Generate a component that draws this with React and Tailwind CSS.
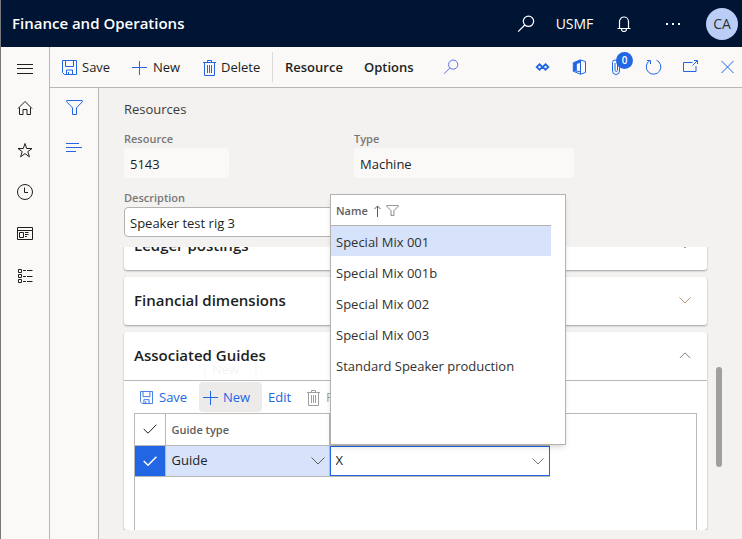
import React from "react";

const Svg = ({ size = 16, w, h, className = "", children, sw = 1 }) => (
  <svg
    width={w || size}
    height={h || size}
    viewBox={`0 0 ${w || size} ${h || size}`}
    fill="none"
    stroke="currentColor"
    strokeWidth={sw}
    className={`shrink-0 ${className}`}
    aria-hidden="true"
  >
    {children}
  </svg>
);

const SearchIcon = ({ size = 16, sw = 1 }) => (
  <svg width={size} height={size} viewBox="0 0 16 16" fill="none" stroke="currentColor" strokeWidth={sw} className="shrink-0" aria-hidden="true">
    <circle cx="10.2" cy="5.6" r="4.6" />
    <path d="M6.900 8.900 1 14.800" />
  </svg>
);

const SaveIcon = ({ size = 15 }) => (
  <svg width={size} height={size} viewBox="0 0 15 15" fill="none" stroke="currentColor" className="shrink-0" aria-hidden="true">
    <path d="M.5.5h14v14H2.500l-2-2zM3.500.5v6h8v-6M4.500 14.500v-4.500h6v4.500M6.500 12v2.500" />
  </svg>
);

const PlusIcon = () => (
  <Svg size={16}>
    <path d="M7.500 1v14M0 7.500h15" />
  </Svg>
);

const TrashIcon = () => (
  <Svg w={13} h={16}>
    <path d="M0 2.500h13M4.500 2.500v-2h4v2M1.500 2.500v13h10v-13M4.500 5v8M6.500 5v8M8.500 5v8" />
  </Svg>
);

const FunnelIcon = ({ w = 17, h = 15 }) => (
  <svg width={w} height={h} viewBox="0 0 17 15" fill="none" stroke="currentColor" className="shrink-0" aria-hidden="true">
    <path d="M.7.5h15.600v1.300L10.500 7.800v6.700h-4V7.800L.7 1.800z" />
  </svg>
);

const Chevron = ({ up, size = "w-3" }) => (
  <svg viewBox="0 0 14 8" fill="none" stroke="currentColor" className={`shrink-0 ${size}`} aria-hidden="true">
    <path d={up ? "M.5 7.500 7 1l6.500 6.500" : "M.5.5 7 7 13.500.5"} />
  </svg>
);

const Check = ({ sw = 1 }) => (
  <Svg w={14} h={10} sw={sw}>
    <path d="M.7 5 5 9.200 13.400.7" />
  </Svg>
);

const navItems = [
  ["Home", <path d="M1 8.500 8 1.500l7 7M2.500 7.500v7h3.500v-5h4v5h3.500v-7" />],
  ["Favorites", <path d="M8 1.500 9.700 6.500H15L10.800 9.600l1.600 5.200L8 11.600l-4.400 3.200 1.600-5.200L1 6.500h5.300z" />],
  ["Recent", <><circle cx="8" cy="8" r="7.500" /><path d="M7.500 3.500v5H11" /></>],
  ["Workspaces", <path d="M.5 1.500h15v12H.5zM.5 4.500h15M2.500 6.500h4v5h-4zM8 6.500h3.500M8 8.500h3.500M8 10.500h2" />],
  ["Modules", <path d="M1.500 1.500h3v3h-3zM1.500 6.500h3v3h-3zM1.500 11.500h3v3h-3zM6 2.500h3M10 2.500h5.500M6 8.500h3M10 8.500h5.500M6 13.500h3M10 13.500h5.500" />],
];

const guides = [
  "Special Mix 001",
  "Special Mix 001b",
  "Special Mix 002",
  "Special Mix 003",
  "Standard Speaker production",
];

function TopBar() {
  return (
    <header className="flex h-[47px] shrink-0 items-center bg-[#001433] pr-1 pl-[11px] text-white">
      <h1 className="flex-1 text-[15px] font-semibold whitespace-nowrap">Finance and Operations</h1>
      <button aria-label="Search" className="flex w-[49px] justify-center"><SearchIcon size={18} sw={1.1} /></button>
      <button className="w-[49px] text-center text-sm">USMF</button>
      <button aria-label="Notifications" className="flex w-[49px] justify-center">
        <Svg w={14} h={16} sw={1.2}>
          <path d="M.5 12.500h13M2.500 12.500V5.500a4.500 4.500 0 0 1 9 0v7M4.500 13a2.500 2.500 0 0 0 5 0" />
        </Svg>
      </button>
      <button aria-label="More" className="flex w-[49px] justify-center">
        <svg width="16" height="4" viewBox="0 0 16 4" fill="currentColor" aria-hidden="true">
          <rect x="1" y="1" width="2" height="2" /><rect x="7" y="1" width="2" height="2" /><rect x="13" y="1" width="2" height="2" />
        </svg>
      </button>
      <button className="ml-[9px] size-8 rounded-full bg-[#b9cdf6] text-sm text-[#323130]">CA</button>
    </header>
  );
}

function ActionBar() {
  return (
    <div className="flex h-[41px] shrink-0 items-center border-b border-[#b9b8b6] bg-[#faf9f8] pr-[6px] pl-3 text-[13px] text-[#201f1e]">
      <button className="flex w-[70px] items-center gap-[5px] pt-px"><span className="text-[#2266e3]"><SaveIcon /></span>Save</button>
      <button className="flex w-[71px] items-center gap-[5px] pt-px"><span className="text-[#2266e3]"><PlusIcon /></span>New</button>
      <button className="flex w-[69px] items-center gap-[5px] pt-px"><span className="text-[#2266e3]"><TrashIcon /></span>Delete</button>
      <span className="h-[30px] w-px bg-[#dddbd9]" />
      <button className="w-[79px] pt-px pl-3 text-left font-semibold">Resource</button>
      <button className="w-[79px] pt-px pl-3 text-left font-semibold">Options</button>
      <button aria-label="Find an action" className="pl-3 text-[#5b6fe6]"><SearchIcon /></button>
      <div className="ml-auto flex items-center gap-5 text-[#2266e3]">
        <button aria-label="Apps">
          <Svg w={17} h={16} sw={1.8}>
            <path d="M5.500 5.200 8.300 8 5.500 10.800 2.700 8zM11.500 5.200 14.300 8l-2.800 2.800L8.700 8z" />
          </Svg>
        </button>
        <button aria-label="Open in Office">
          <Svg w={17} h={16}>
            <path d="M2.300 3.800 9.500.8V3.300L5.300 4.600v7L2.300 12.300z" fill="currentColor" />
            <path d="M2.500 12.300 9.500 15.200V1l5 1.500v11l-5 1.700M5 12l4.500.8" />
          </Svg>
        </button>
        <button aria-label="Attachments" className="relative">
          <Svg w={17} h={16}>
            <path d="M11.500 4v8a3.500 3.500 0 0 1-7 0V3.500a2.500 2.500 0 0 1 5 0V11.500a1.300 1.300 0 0 1-2.500 0V4" />
          </Svg>
          <span className="absolute -top-[7px] left-2 flex size-[17px] items-center justify-center rounded-full bg-[#2266e3] text-[10px] font-semibold text-white">0</span>
        </button>
        <button aria-label="Refresh">
          <Svg w={17} h={16}>
            <path d="M11.500 1.200a7.300 7.300 0 1 1-7 .6M2 1.500h3.500V5" />
          </Svg>
        </button>
        <button aria-label="Open in new window">
          <Svg w={17} h={16}>
            <path d="M10.500 3.500H1.500v9h12.500V7M10.500 6.500l5-5M12 1.500h3.500V5" />
          </Svg>
        </button>
        <button aria-label="Close">
          <Svg w={17} h={16}>
            <path d="m2.500 2 12 12M14.500 2l-12 12" />
          </Svg>
        </button>
      </div>
    </div>
  );
}

function Lookup() {
  return (
    <div role="dialog" aria-label="Guide lookup" className="absolute bottom-[85px] left-[206px] h-[251px] w-[236px] border border-[#b3b2b0] bg-white shadow-md">
      <table className="w-[220px] text-left text-[13px] text-[#323130]">
        <thead>
          <tr className="h-[30px] border-b border-[#b3b2b0] text-[#605e5c]">
            <th className="pt-[2px] pl-[5px] text-[11px] font-semibold">
              <span className="flex items-center gap-[6px]">
                Name
                <span className="flex items-center gap-[5px]">
                  <Svg w={7} h={12}><path d="M3.500 12V1M.5 4l3-3 3 3" /></Svg>
                  <FunnelIcon w={13} h={11} />
                </span>
              </span>
            </th>
          </tr>
        </thead>
        <tbody>
          {guides.map((g, i) => (
            <tr key={g} className="h-[31px]">
              <td className={`pt-1 pl-[5px] ${i === 0 ? "bg-[#d7e2fb]" : ""}`}>{g}</td>
            </tr>
          ))}
        </tbody>
      </table>
    </div>
  );
}

function Section({ title, open, className = "", children }) {
  return (
    <section className={`shrink-0 rounded-[3px] bg-white shadow-[0_1px_2px_rgba(0,0,0,0.35)] ${className}`}>
      <button aria-expanded={!!open} className="relative z-10 flex h-12 w-full items-center justify-between pr-4 pb-[2px] pl-[10px] text-[15px] font-semibold text-[#201f1e]">
        {title}
        <span className={open ? "text-[#66667a]" : "text-[#b07f58]"}><Chevron up={open} /></span>
      </button>
      {children}
    </section>
  );
}

function GuidesGrid() {
  return (
    <div className="mx-[10px] flex-1 border border-b-0 border-[#b9b8b6]">
      <table className="w-[415px] table-fixed text-left text-[13px]">
        <thead>
          <tr className="h-[31px] border-b border-[#b9b8b6] text-[#605e5c]">
            <th className="w-[30px] border-r border-[#b9b8b6] text-[#201f1e]"><span className="flex justify-center"><Check /></span></th>
            <th className="w-[164px] border-r border-[#b9b8b6] pt-[2px] pl-[6px] text-[11px] font-semibold">Guide type</th>
            <th className="pl-[6px] text-[11px] font-semibold">Guide</th>
          </tr>
        </thead>
        <tbody>
          <tr className="h-[31px] border-b border-[#b9b8b6]">
            <td className="bg-[#2266e3] text-white"><span className="flex justify-center"><Check sw={1.5} /></span></td>
            <td className="border-x border-[#b9b8b6] bg-[#d7e2fb] pt-px pr-1 pl-[6px] text-[#201f1e]">
              <div className="flex items-center justify-between">Guide<span className="text-[#605e5c]"><Chevron size="w-[14px]" /></span></div>
            </td>
            <td className="p-0">
              <div className="flex h-[30px] items-center border border-[#2266e3] bg-white pt-px pr-[5px] pl-[5px]">
                <input aria-label="Guide" defaultValue="X" className="min-w-0 flex-1 text-[#201f1e] outline-none" />
                <span className="text-[#605e5c]"><Chevron /></span>
              </div>
            </td>
          </tr>
        </tbody>
      </table>
    </div>
  );
}

export default function App() {
  return (
    <div className="flex h-screen flex-col overflow-hidden border-l border-[#77797c] bg-[#f3f2f1] font-['Open_Sans','Noto_Sans',sans-serif]">
      <TopBar />
      <div className="flex min-h-0 flex-1">
        <nav className="flex w-[49px] shrink-0 flex-col items-center border-r border-[#b9b8b6] bg-[#faf9f8] text-[#201f1e]">
          <button aria-label="Menu" className="flex h-[42px] items-center"><Svg><path d="M0 4.500h16M0 8.500h16M0 13.500h16" /></Svg></button>
          <div className="flex flex-col gap-[26px] pt-[11px]">
            {navItems.map(([label, icon]) => (
              <button key={label} aria-label={label}><Svg>{icon}</Svg></button>
            ))}
          </div>
        </nav>
        <div className="flex min-w-0 flex-1 flex-col">
          <ActionBar />
          <div className="flex min-h-0 flex-1">
            <aside className="flex w-[49px] shrink-0 flex-col items-center gap-[27px] border-r border-[#b9b8b6] bg-[#faf9f8] pt-3 text-[#2266e3]">
              <button aria-label="Filter"><FunnelIcon /></button>
              <button aria-label="Related information"><Svg w={16} h={12}><path d="M0 1.500h13M0 5.500h16M0 9.500h10" /></Svg></button>
            </aside>
            <main className="flex min-w-0 flex-1 flex-col pr-5 pb-[9px] pl-[25px] text-[13px] text-[#201f1e]">
              <h2 className="mt-[11px] leading-5 text-[#3b3a39]">Resources</h2>
              <div className="mt-[11px] flex gap-[125px]">
                <div>
                  <label htmlFor="resource" className="block text-[11px] leading-[18px] font-semibold text-[#797775]">Resource</label>
                  <input id="resource" readOnly defaultValue="5143" className="block h-[30px] w-[105px] rounded-sm bg-[#faf9f8] px-[6px] pt-[2px]" />
                </div>
                <div>
                  <label htmlFor="type" className="block text-[11px] leading-[18px] font-semibold text-[#797775]">Type</label>
                  <input id="type" readOnly defaultValue="Machine" className="block h-[30px] w-[220px] rounded-sm bg-[#faf9f8] px-[6px] pt-[2px]" />
                </div>
              </div>
              <label htmlFor="description" className="mt-[11px] block text-[11px] leading-[18px] font-semibold text-[#797775]">Description</label>
              <input id="description" defaultValue="Speaker test rig 3" className="block h-[30px] w-[220px] shrink-0 rounded-sm border border-[#b3b2b0] bg-white px-[5px] pt-[2px]" />
              <div className="relative mt-[10px] flex min-h-0 flex-1 gap-[5px]">
                <div className="-ml-1 flex flex-1 flex-col gap-[7px] overflow-hidden px-1">
                  <Section title="Ledger postings" className="-mt-[25px]" />
                  <Section title="Financial dimensions" />
                  <Section title="Associated Guides" open className="relative flex flex-1 flex-col">
                    <span aria-hidden="true" className="absolute top-[18px] left-20 w-[53px] border-2 border-b-0 border-[#fafafa] pt-2 pl-[6px] leading-[18px] text-[#f4f4f4]">New</span>
                    <div className="relative flex h-[33px] items-center border-t border-[#b9b8b6] pl-4 text-[#2266e3]">
                      <button className="flex w-[59px] items-center gap-[6px] pt-px"><SaveIcon size={13} />Save</button>
                      <button className="flex h-[30px] w-[63px] items-center gap-1 rounded-sm bg-[#edebe9] pt-px pl-1"><PlusIcon />New</button>
                      <button className="w-[45px] pt-px pl-[6px] text-left">Edit</button>
                      <button disabled className="flex items-center gap-[6px] pt-px text-[#a19f9d]"><TrashIcon />Remove</button>
                    </div>
                    <GuidesGrid />
                  </Section>
                </div>
                <div className="mt-[120px] h-[100px] w-[6px] rounded-full bg-[#a19f9d]" />
                <Lookup />
              </div>
            </main>
          </div>
        </div>
      </div>
    </div>
  );
}
